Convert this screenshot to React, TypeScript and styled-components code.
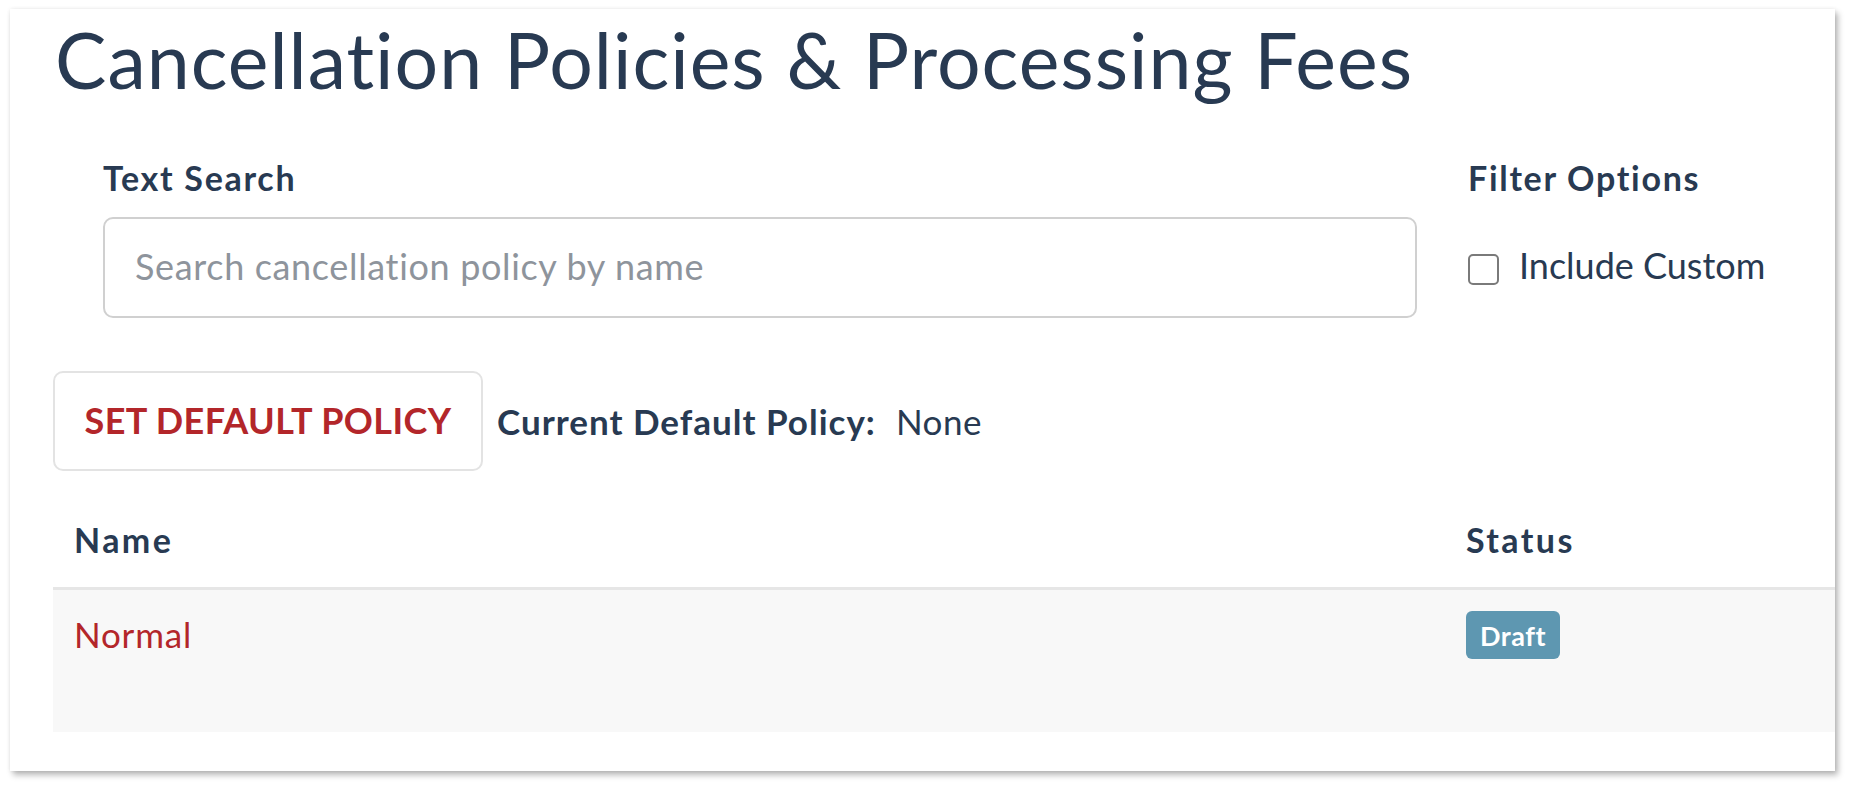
import React from "react";
import styled, { createGlobalStyle } from "styled-components";

const Global = createGlobalStyle`
  html, body { margin: 0; padding: 0; background: #ffffff; }
  body { font-family: Lato, "Noto Sans", sans-serif; color: #283a52; }
  * { box-sizing: border-box; }
`;

const Page = styled.div`
  padding: 9px 17px 17px 10px;
`;

const Card = styled.div`
  width: 1825px;
  height: 762px;
  background: #ffffff;
  box-shadow: 0 0 4px rgba(0, 0, 0, 0.08), 3px 4px 6px rgba(0, 0, 0, 0.28);
  overflow: hidden;
  padding-left: 43px;
`;

const Title = styled.h1`
  margin: 4px 0 0 2px;
  font-size: 77px;
  font-weight: 400;
  line-height: 1.2;
  letter-spacing: 1px;
  color: #283a52;
  white-space: nowrap;
`;

const FilterRow = styled.div`
  display: grid;
  grid-template-columns: 1314px 1fr;
  column-gap: 51px;
  padding-left: 50px;
  margin-top: 54px;
`;

const Field = styled.div`
  display: flex;
  flex-direction: column;
`;

const Label = styled.label`
  font-size: 34px;
  font-weight: 700;
  line-height: 1.2;
  letter-spacing: 1.7px;
  color: #283a52;
  margin-top: -1px;
  margin-bottom: 18px;
`;

const SearchInput = styled.input`
  height: 101px;
  width: 100%;
  border: 2px solid #d0d0d0;
  border-radius: 10px;
  padding: 0 30px 4px;
  font-family: Lato, "Noto Sans", sans-serif;
  font-size: 36px;
  letter-spacing: 0.65px;
  color: #283a52;
  outline: none;
  &::placeholder { color: #8e949c; }
`;

const CheckRow = styled.label`
  height: 101px;
  display: flex;
  align-items: center;
  gap: 20px;
  padding-bottom: 5px;
  font-size: 36px;
  color: #283a52;
`;

const CheckBox = styled.span`
  width: 31px;
  height: 31px;
  border: 2px solid #7a7a7a;
  border-radius: 5px;
  background: #fff;
  flex: none;
  margin-top: 8px;
`;

const ActionRow = styled.div`
  display: flex;
  align-items: center;
  margin-top: 53px;
`;

const OutlineButton = styled.button`
  width: 430px;
  height: 100px;
  border: 2px solid #e3e3e3;
  border-radius: 10px;
  background: #fff;
  color: #b3262a;
  font-family: Lato, "Noto Sans", sans-serif;
  font-size: 36px;
  font-weight: 700;
  letter-spacing: 0.4px;
  padding: 0 0 2px;
`;

const DefaultLabel = styled.span`
  margin-left: 14px;
  font-size: 35px;
  font-weight: 700;
  letter-spacing: 1px;
  color: #283a52;
`;

const DefaultValue = styled.span`
  margin-left: 20px;
  font-size: 35px;
  letter-spacing: 0.5px;
  color: #283a52;
`;

const Table = styled.div`
  margin-top: 23px;
`;

const Row = styled.div<{ $head?: boolean }>`
  display: grid;
  grid-template-columns: 1392px 1fr;
  height: ${(p) => (p.$head ? "96px" : "142px")};
  background: ${(p) => (p.$head ? "#ffffff" : "#f8f8f8")};
  border-bottom: ${(p) => (p.$head ? "3px solid #e6e6e6" : "none")};
  align-items: ${(p) => (p.$head ? "center" : "start")};
`;

const HeadCell = styled.div`
  padding-left: 21px;
  font-size: 34px;
  font-weight: 700;
  line-height: 1.2;
  letter-spacing: 2.4px;
  color: #283a52;
`;

const Cell = styled.div`
  padding: 23px 0 0 21px;
  font-size: 35px;
  line-height: 1.2;
  letter-spacing: 0.8px;
`;

const NameLink = styled.a`
  color: #b3262a;
  text-decoration: none;
`;

const BadgeCell = styled.div`
  padding: 21px 0 0 21px;
`;

const Badge = styled.span`
  display: inline-flex;
  align-items: center;
  justify-content: center;
  width: 94px;
  height: 48px;
  border-radius: 6px;
  background: #5e97b1;
  color: #ffffff;
  font-size: 27px;
  font-weight: 700;
  letter-spacing: 0.5px;
`;

export default function App() {
  return (
    <>
      <Global />
      <Page>
        <Card>
          <Title>Cancellation Policies &amp; Processing Fees</Title>
          <FilterRow>
            <Field>
              <Label>Text Search</Label>
              <SearchInput placeholder="Search cancellation policy by name" />
            </Field>
            <Field>
              <Label>Filter Options</Label>
              <CheckRow>
                <CheckBox />
                Include Custom
              </CheckRow>
            </Field>
          </FilterRow>
          <ActionRow>
            <OutlineButton>SET DEFAULT POLICY</OutlineButton>
            <DefaultLabel>Current Default Policy:</DefaultLabel>
            <DefaultValue>None</DefaultValue>
          </ActionRow>
          <Table>
            <Row $head>
              <HeadCell>Name</HeadCell>
              <HeadCell>Status</HeadCell>
            </Row>
            <Row>
              <Cell>
                <NameLink href="#">Normal</NameLink>
              </Cell>
              <BadgeCell>
                <Badge>Draft</Badge>
              </BadgeCell>
            </Row>
          </Table>
        </Card>
      </Page>
    </>
  );
}
